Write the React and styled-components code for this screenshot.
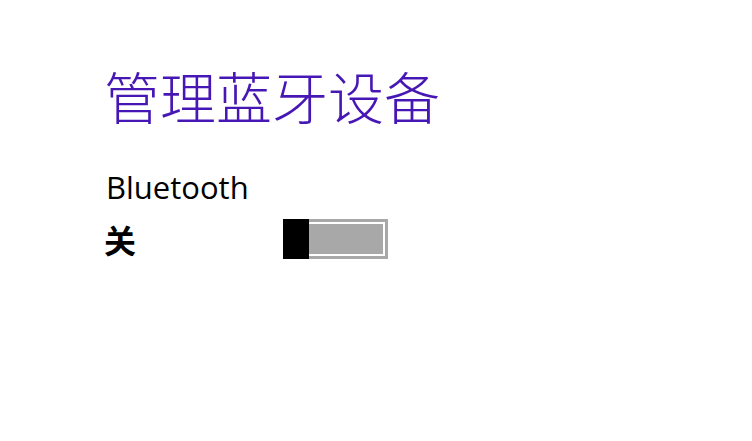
import React from "react";
import styled, { createGlobalStyle } from "styled-components";

const Global = createGlobalStyle`
  html, body { margin: 0; padding: 0; background: #fff; }
  body { width: 752px; height: 441px; overflow: hidden; }
`;

const Page = styled.div`
  padding: 59px 0 0 104px;
  display: flex;
  flex-direction: column;
`;

const Title = styled.h1`
  margin: 0;
  font-family: "Noto Sans CJK SC", sans-serif;
  font-weight: 300;
  font-size: 56px;
  line-height: 72px;
  color: #4617b4;
`;

const Label = styled.div`
  margin-top: 36px;
  padding-left: 2px;
  font-family: "Open Sans", "Noto Sans", sans-serif;
  font-size: 31px;
  line-height: 40px;
  color: #000;
`;

const Row = styled.div`
  display: flex;
  align-items: center;
  margin-top: 12px;
`;

const State = styled.span`
  width: 179px;
  font-family: "Noto Sans CJK SC", sans-serif;
  font-weight: 700;
  font-size: 32px;
  line-height: 40px;
  color: #000;
`;

const Toggle = styled.div`
  position: relative;
  width: 105px;
  height: 40px;
  box-sizing: border-box;
  border: 3px solid #a8a8a8;
  background: #fff;
  padding: 2px;
`;

const Track = styled.div`
  width: 100%;
  height: 100%;
  background: #a8a8a8;
`;

const Thumb = styled.div`
  position: absolute;
  left: -3px;
  top: -3px;
  width: 26px;
  height: 40px;
  background: #000;
`;

export default function App() {
  return (
    <>
      <Global />
      <Page>
        <Title>管理蓝牙设备</Title>
        <Label>Bluetooth</Label>
        <Row>
          <State>关</State>
          <Toggle>
            <Track />
            <Thumb />
          </Toggle>
        </Row>
      </Page>
    </>
  );
}
